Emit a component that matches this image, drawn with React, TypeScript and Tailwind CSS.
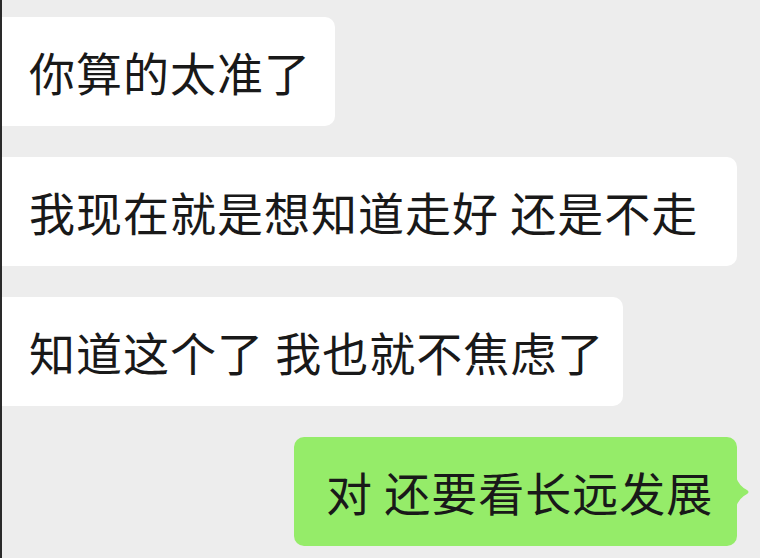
const font = {
  fontFamily: '"Noto Sans CJK SC", "Noto Sans", sans-serif',
};

const incoming = [
  { text: "你算的太准了", width: "w-[333px]" },
  { text: "我现在就是想知道走好 还是不走", width: "w-[735px]" },
  { text: "知道这个了 我也就不焦虑了", width: "w-[621px]" },
];

export default function App() {
  return (
    <div
      className="h-[558px] w-[760px] overflow-hidden bg-[#ededed] border-l-2 border-[#2a2a2a] flex flex-col gap-[31px] pt-[17px]"
      style={font}
    >
      {incoming.map((m) => (
        <div
          key={m.text}
          className={`${m.width} h-[109px] shrink-0 bg-white rounded-r-[10px] flex items-center pl-[27px] text-[46px] tracking-[1px] text-[#191919] whitespace-nowrap`}
        >
          {m.text}
        </div>
      ))}

      {/* outgoing message */}
      <div className="flex justify-end items-center pr-[10px] shrink-0">
        <div className="w-[443px] h-[109px] bg-[#95ec69] rounded-[10px] flex items-center pl-[32px] text-[46px] tracking-[1px] text-[#191919] whitespace-nowrap">
          对 还要看长远发展
        </div>
        <svg width="14" height="30" viewBox="0 0 14 30" className="-ml-px">
          <path d="M0 0 Q3 9 11 13 Q14 15 11 17 Q3 21 0 30 Z" fill="#95ec69" />
        </svg>
      </div>
    </div>
  );
}
